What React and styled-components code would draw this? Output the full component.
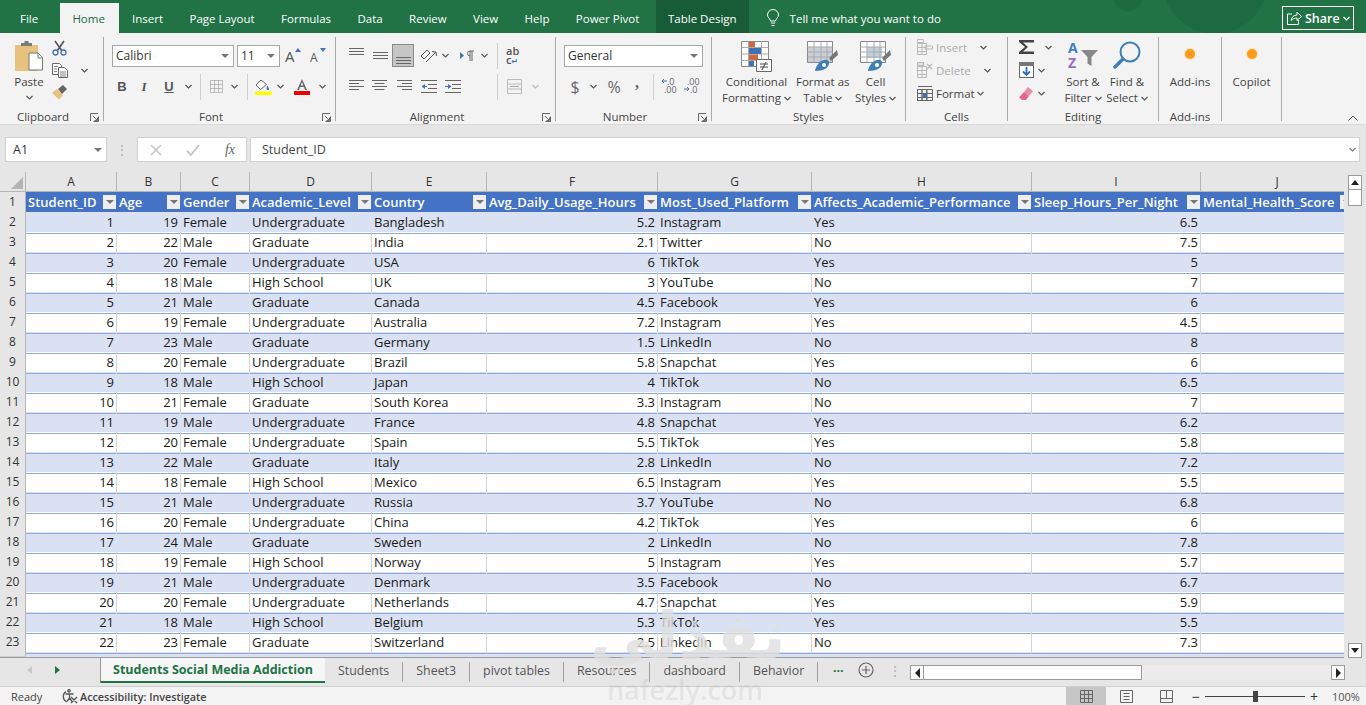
import styled, { createGlobalStyle } from 'styled-components';

const GlobalStyle = createGlobalStyle`
  html, body { margin: 0; padding: 0; height: 100%; overflow: hidden; background: #e6e6e6; }
  #root { height: 705px; }
  * { box-sizing: border-box; }
`;

const FONT = `"Open Sans", "Noto Sans", "Liberation Sans", sans-serif`;
const colWidths = [26, 91, 64, 69, 122, 115, 171, 154, 220, 169, 153];
const colTemplate = colWidths.map((w) => `${w}px`).join(' ');

const tabs = ['Insert', 'Page Layout', 'Formulas', 'Data', 'Review', 'View', 'Help', 'Power Pivot'];
const letters = ['A', 'B', 'C', 'D', 'E', 'F', 'G', 'H', 'I', 'J'];
const headers = [
  'Student_ID', 'Age', 'Gender', 'Academic_Level', 'Country', 'Avg_Daily_Usage_Hours',
  'Most_Used_Platform', 'Affects_Academic_Performance', 'Sleep_Hours_Per_Night', 'Mental_Health_Score',
];
const rows = [
  [1, 19, 'Female', 'Undergraduate', 'Bangladesh', 5.2, 'Instagram', 'Yes', 6.5],
  [2, 22, 'Male', 'Graduate', 'India', 2.1, 'Twitter', 'No', 7.5],
  [3, 20, 'Female', 'Undergraduate', 'USA', 6, 'TikTok', 'Yes', 5],
  [4, 18, 'Male', 'High School', 'UK', 3, 'YouTube', 'No', 7],
  [5, 21, 'Male', 'Graduate', 'Canada', 4.5, 'Facebook', 'Yes', 6],
  [6, 19, 'Female', 'Undergraduate', 'Australia', 7.2, 'Instagram', 'Yes', 4.5],
  [7, 23, 'Male', 'Graduate', 'Germany', 1.5, 'LinkedIn', 'No', 8],
  [8, 20, 'Female', 'Undergraduate', 'Brazil', 5.8, 'Snapchat', 'Yes', 6],
  [9, 18, 'Male', 'High School', 'Japan', 4, 'TikTok', 'No', 6.5],
  [10, 21, 'Female', 'Graduate', 'South Korea', 3.3, 'Instagram', 'No', 7],
  [11, 19, 'Male', 'Undergraduate', 'France', 4.8, 'Snapchat', 'Yes', 6.2],
  [12, 20, 'Female', 'Undergraduate', 'Spain', 5.5, 'TikTok', 'Yes', 5.8],
  [13, 22, 'Male', 'Graduate', 'Italy', 2.8, 'LinkedIn', 'No', 7.2],
  [14, 18, 'Female', 'High School', 'Mexico', 6.5, 'Instagram', 'Yes', 5.5],
  [15, 21, 'Male', 'Undergraduate', 'Russia', 3.7, 'YouTube', 'No', 6.8],
  [16, 20, 'Female', 'Undergraduate', 'China', 4.2, 'TikTok', 'Yes', 6],
  [17, 24, 'Male', 'Graduate', 'Sweden', 2, 'LinkedIn', 'No', 7.8],
  [18, 19, 'Female', 'High School', 'Norway', 5, 'Instagram', 'Yes', 5.7],
  [19, 21, 'Male', 'Undergraduate', 'Denmark', 3.5, 'Facebook', 'No', 6.7],
  [20, 20, 'Female', 'Undergraduate', 'Netherlands', 4.7, 'Snapchat', 'Yes', 5.9],
  [21, 18, 'Male', 'High School', 'Belgium', 5.3, 'TikTok', 'Yes', 5.5],
  [22, 23, 'Female', 'Graduate', 'Switzerland', 2.5, 'LinkedIn', 'No', 7.3],
];
const sheets = ['Students', 'Sheet3', 'pivot tables', 'Resources', 'dashboard', 'Behavior'];

// icons
const Chev = ({ color = '#555' }) => (
  <svg width="7" height="5" viewBox="0 0 7 5">
    <path d="M.5 1 3.500 4 6.500 1" fill="none" stroke={color} strokeWidth="1.200" />
  </svg>
);
const Caret = () => (
  <svg width="8" height="4" viewBox="0 0 8 4"><path d="M0 0h8L4 4z" fill="#777" /></svg>
);
const Launcher = () => (
  <svg width="9" height="9" viewBox="0 0 9 9" fill="none" stroke="#666">
    <path d="M.5 8V.5H8M8.500 3.500v5H3.500M3 3l4 4M7.500 4.500v3h-3" />
  </svg>
);
const Lines = ({ widths, w = 15, h = 13, top = 0, gap = 3, align = 'left', color = '#666' }) => (
  <svg width={w} height={h} viewBox={`0 0 ${w} ${h}`}>
    {widths.map((lw, i) => {
      const x = align === 'left' ? 0 : align === 'right' ? w - lw : (w - lw) / 2;
      return <rect key={i} x={x} y={top + i * gap} width={lw} height="1" fill={color} />;
    })}
  </svg>
);
const PasteIcon = () => (
  <svg width="30" height="32" viewBox="0 0 30 32">
    <path d="M1 4h23v26H1z" fill="#e6c27e" />
    <path d="M7 5V2h3.500V0h4v2H18v3z" fill="#7a7a7a" />
    <path d="M15 12h9l4.500 4.500V29H15z" fill="#fff" stroke="#777" />
    <path d="M24 12v5h4.500" fill="none" stroke="#777" />
  </svg>
);
const Scissors = () => (
  <svg width="15" height="16" viewBox="0 0 15 16" fill="none">
    <path d="M3 1 10 11M12 1 5 11" stroke="#555" strokeWidth="1.600" />
    <circle cx="3.500" cy="12.500" r="2.500" stroke="#3f73b5" strokeWidth="1.300" />
    <circle cx="11.500" cy="12.500" r="2.500" stroke="#3f73b5" strokeWidth="1.300" />
  </svg>
);
const CopyIcon = () => (
  <svg width="16" height="15" viewBox="0 0 16 15" fill="#fff" stroke="#666">
    <path d="M.5.500h7l2 2v9h-9z" />
    <path d="M6.500 4.500h6l3 3v7h-9z" />
    <path d="M2 3.500h4M2 6h3M2 8.500h3M8 9h6M8 11h6M8 13h6" strokeWidth=".8" />
  </svg>
);
const BrushIcon = () => (
  <svg width="16" height="15" viewBox="0 0 16 15">
    <path d="M5 4 11 10 7 14.500 0 8z" fill="#e6c27e" />
    <path d="M6 4 11 0 15 4 10 9z" fill="#666" />
  </svg>
);
const GrowA = ({ up, size }) => (
  <svg width="16" height="15" viewBox="0 0 16 15">
    <text x="0" y="14" fontFamily={FONT} fontSize={size} fill="#555">A</text>
    <path d={up ? 'M10 4 13 0 16 4z' : 'M10 0h6l-3 4z'} fill="#3f73b5" />
  </svg>
);
const BorderIcon = () => (
  <svg width="13" height="13" viewBox="0 0 13 13" fill="none" stroke="#888" strokeDasharray="1 1">
    <path d="M.5.500h12v12H.5zM.5 4.500h12M.5 8.500h12M4.500.5v12M8.500.5v12" />
  </svg>
);
const FillIcon = () => (
  <svg width="17" height="16" viewBox="0 0 17 16">
    <path d="M6 1 1 6l4.500 4.500 6-5z" fill="#fff" stroke="#666" />
    <path d="M12 6.500c1.500 2 2.500 3 2 4s-2.500.5-2.500-.5z" fill="#3f73b5" />
    <rect x="0" y="12.500" width="17" height="3.500" fill="#ffff00" />
  </svg>
);
const ColorA = () => (
  <svg width="16" height="16" viewBox="0 0 16 16">
    <path d="M8 0 3 11h2l1-3h4l1 3h2zM6.700 6.500 8 3l1.300 3.500z" fill="#666" />
    <rect y="12" width="16" height="4" fill="#f00000" />
  </svg>
);
const OrientIcon = () => (
  <svg width="18" height="16" viewBox="0 0 18 16" fill="none" stroke="#555">
    <path d="M1 8 7 2l3 3-6 6zM6 14 16 4M12 3.500l4 .5.500 4" />
  </svg>
);
const IndentIcon = ({ flip }) => (
  <svg width="16" height="13" viewBox="0 0 16 13">
    <path d="M0 .5h16M7 4.500h9M7 8.500h9M0 12.500h16" stroke="#666" />
    <path d={flip ? 'M3 4 6.500 6.500 3 9z' : 'M4 4 .5 6.500 4 9z'} fill="#3f73b5" />
    <rect x={flip ? 0 : 3} y="6" width="3" height="1" fill="#3f73b5" />
  </svg>
);
const ParaIcon = () => (
  <svg width="15" height="12" viewBox="0 0 15 12">
    <path d="M0 2 4 5.500 0 9z" fill="#3f73b5" />
    <path d="M10 11V1h4M12 11V1M10 1a2.500 2.500 0 0 0 0 5" fill="none" stroke="#666" />
  </svg>
);
const MergeIcon = () => (
  <svg width="15" height="15" viewBox="0 0 15 15" fill="none" stroke="#bbb">
    <path d="M.5.500h14v14H.5zM.5 5h14M.5 10h14" />
    <path d="M3 7.500h9" stroke="#9ab" />
  </svg>
);
const DecIcon = ({ more }) => (
  <svg width="16" height="17" viewBox="0 0 16 17">
    <text x={more ? 3 : 6} y="7" fontFamily={FONT} fontSize="9" fill="#666">{more ? '.00' : '.0'}</text>
    <text x={more ? 6 : 3} y="15" fontFamily={FONT} fontSize="9" fill="#666">{more ? '.0' : '.00'}</text>
    {more
      ? <path d="M0 11h5M3 9l2 2-2 2" stroke="#3f73b5" fill="none" />
      : <path d="M6 3H1M3 1 1 3l2 2" stroke="#3f73b5" fill="none" />}
  </svg>
);
const CondIcon = () => (
  <svg width="31" height="31" viewBox="0 0 31 31">
    <path d="M.5.500h27v25H.5z" fill="#fff" stroke="#888" />
    <path d="M.5 6.500h27M.5 13h27M.5 19.500h27M7.500.5v25M20.500.5v25" stroke="#aaa" />
    <rect x="8" y="1" width="6" height="5" fill="#d2683a" />
    <rect x="8" y="7" width="12" height="6" fill="#3f73b5" />
    <rect x="8" y="13.500" width="9" height="5.500" fill="#d2683a" />
    <rect x="8" y="20" width="5" height="5" fill="#3f73b5" />
    <path d="M15.500 18.500h15v12h-15z" fill="#fff" stroke="#666" />
    <path d="M19 23h8M19 26h8M25 21l-4 8" stroke="#444" fill="none" />
  </svg>
);
const TableBrush = ({ cell }) => (
  <svg width="31" height="31" viewBox="0 0 31 31">
    <path d="M.5.500h25v21H.5z" fill="#fff" stroke="#888" />
    {cell
      ? <rect x="7" y="6" width="15" height="11" fill="#c3cfdd" />
      : <rect x="1" y="6" width="24" height="15" fill="#c9cfd6" />}
    <path d="M.5 6h25M.5 11h25M.5 16h25M7 .5v21M14 .5v21M20 .5v21" stroke="#aaa" />
    <path d="M30 9 22 17l2 3 7-6z" fill="#777" />
    <path d="M8 30c1-6 5-10 9-11 4-1 6 2 5 4-1 4-5 7-14 7z" fill="#3f7fb8" />
    <circle cx="17" cy="24" r="2" fill="#fff" />
  </svg>
);
const CellIcon = ({ kind, dim }) => {
  const s = dim ? '#b9b9b9' : '#777';
  return (
    <svg width="16" height="16" viewBox="0 0 16 16" fill="none" stroke={s}>
      <path d="M.5 4.500h9M.5 8.500h9M.5 12.500h9M.5 4.500v11h9v-11M5 4.500v11" />
      {kind === 'insert' && <path d="M.5.500h6v3h-6zM8 7h7.500v3H8z" />}
      {kind === 'delete' && <path d="M.5.500h6v3h-6zM10 2l5 5M15 2l-5 5" strokeWidth="1.300" />}
      {kind === 'format' && <path d="M1 1.500h14M.5 4.500h15v11H.5zM.5 8.500h15M.5 12.500h15M5 4.500v11M10 4.500v11" stroke="#666" />}
      {kind === 'format' && <rect x="6" y="9" width="4" height="3" fill="#3f73b5" stroke="none" />}
    </svg>
  );
};
const SigmaIcon = () => (
  <svg width="16" height="14" viewBox="0 0 16 14">
    <path d="M0 0h15v2.500H4L9 7l-5 4.500h11V14H0v-2l6-5-6-5z" fill="#444" />
  </svg>
);
const FillDown = () => (
  <svg width="15" height="16" viewBox="0 0 15 16">
    <rect x=".5" y=".5" width="14" height="15" fill="#fff" stroke="#666" />
    <rect x="0" y="0" width="15" height="4" fill="#777" />
    <path d="M7.500 5v8M4 9.500l3.500 3.500L11 9.500" fill="none" stroke="#2f6fb5" strokeWidth="1.800" />
  </svg>
);
const EraserIcon = () => (
  <svg width="14" height="13" viewBox="0 0 14 13">
    <path d="M9 0l5 4-4 5-5-4z" fill="#e88ea8" />
    <path d="M5 5l5 4-3 4H3L0 10.500z" fill="#e0688a" />
  </svg>
);
const SortIcon = () => (
  <svg width="31" height="30" viewBox="0 0 31 30">
    <text x="0" y="12" fontFamily={FONT} fontSize="14" fontWeight="700" fill="#3f7fc4">A</text>
    <text x="0" y="27" fontFamily={FONT} fontSize="14" fontWeight="700" fill="#9a6fc0">Z</text>
    <path d="M13 9h17l-6.500 7v9l-4-2.500V16z" fill="#888" />
  </svg>
);
const SearchIcon = () => (
  <svg width="28" height="28" viewBox="0 0 28 28" fill="none">
    <circle cx="17" cy="11" r="9.500" stroke="#3f7fb8" strokeWidth="2" />
    <path d="M10 18 2 26" stroke="#3f7fb8" strokeWidth="3.500" strokeLinecap="round" />
  </svg>
);
const CrossIcon = () => (
  <svg width="12" height="12" viewBox="0 0 12 12"><path d="M1 1l10 10M11 1 1 11" stroke="#c4c4c4" strokeWidth="1.500" /></svg>
);
const CheckIcon = () => (
  <svg width="14" height="12" viewBox="0 0 14 12"><path d="M1 7l4 4 8-10" fill="none" stroke="#c4c4c4" strokeWidth="1.800" /></svg>
);
const BulbIcon = () => (
  <svg width="12" height="18" viewBox="0 0 12 18" fill="none" stroke="#fff">
    <path d="M3.500 12C3 9.500.5 8.500.5 6a5.500 5.500 0 0 1 11 0c0 2.500-2.500 3.500-3 6zM3.800 14h4.400M4.500 16.500h3" />
  </svg>
);
const ShareIcon = () => (
  <svg width="15" height="14" viewBox="0 0 15 14" fill="none" stroke="#fff">
    <path d="M5 3H.5v10.500h11V9M4 9.500C4.500 6 7 4 10 4V1l4.500 4.500L10 9.500V7C7.500 7 5.500 8 4 9.500z" />
  </svg>
);
const ArrowBtn = ({ dir }) => {
  const d = { up: 'M1 6 5 1 9 6z', down: 'M1 1 5 6 9 1z', left: 'M6 0 1 5 6 10z', right: 'M1 0 6 5 1 10z' }[dir];
  const vertical = dir === 'up' || dir === 'down';
  return <svg width={vertical ? 10 : 7} height={vertical ? 7 : 10}><path d={d} fill="#222" /></svg>;
};
const AccessIcon = () => (
  <svg width="17" height="15" viewBox="0 0 17 15" fill="none" stroke="#555" strokeWidth="1.300">
    <path d="M5 2.500A6 6 0 0 0 5 12.500" />
    <circle cx="8" cy="1.800" r="1.200" />
    <path d="M4.500 5h8M8.500 5v4M8.500 9l-3 4M8.500 9l3 4M10 8l6 6M16 8l-6 6" />
  </svg>
);
const NormalView = () => (
  <svg width="13" height="13" viewBox="0 0 13 13" fill="none" stroke="#666">
    <path d="M.5.500h12v12H.5zM.5 4.500h12M.5 8.500h12M4.500.5v12M8.500.5v12" />
  </svg>
);
const PageView = () => (
  <svg width="13" height="13" viewBox="0 0 13 13" fill="none" stroke="#666">
    <path d="M.5.500h12v12H.5zM3.500 3.500h6M3.500 6.500h6M3.500 9.500h6" />
  </svg>
);
const BreakView = () => (
  <svg width="13" height="13" viewBox="0 0 13 13" fill="none" stroke="#666">
    <path d="M.5.500h12v12H.5zM.5 8.500h12M6.500.5v8" />
  </svg>
);

const Group = ({ width, label, launcher, children }) => (
  <GroupBox $w={width}>
    <GroupBody>{children}</GroupBody>
    <GroupLabel $launcher={launcher}>
      {label}
      {launcher && <LauncherSpot><Launcher /></LauncherSpot>}
    </GroupLabel>
  </GroupBox>
);

const BigButton = ({ w, icon, children }) => (
  <BigTool $w={w}>
    <BigIcon>{icon}</BigIcon>
    <BigText>{children}</BigText>
  </BigTool>
);

export default function App() {
  return (
    <Page>
      <GlobalStyle />
      <TitleBar>
        <TitleArt width="326" height="33" viewBox="0 0 326 33">
          <circle cx="175" cy="-18" r="52" fill="#1e6a40" />
          <circle cx="88" cy="-4" r="15" fill="#1e6a40" />
        </TitleArt>
        <Tab>File</Tab>
        <Tab $active>Home</Tab>
        {tabs.map((t) => <Tab key={t}>{t}</Tab>)}
        <Tab $dark>Table Design</Tab>
        <TellMe><BulbIcon /><span>Tell me what you want to do</span></TellMe>
        <ShareBtn><ShareIcon /><span>Share</span><Chev color="#fff" /></ShareBtn>
      </TitleBar>

      <Ribbon>
        <Group width={104} label="Clipboard" launcher>
          <PasteCol>
            <PasteIcon />
            <PasteText>Paste</PasteText>
            <Chev />
          </PasteCol>
          <ClipCol>
            <Scissors />
            <ClipCopy><CopyIcon /><Chev /></ClipCopy>
            <BrushIcon />
          </ClipCol>
        </Group>

        <Group width={232} label="Font" launcher>
          <ToolStack $pl={8}>
            <ToolRow>
              <SelectBox $w={122}>Calibri<Caret /></SelectBox>
              <SelectBox $w={43} $ml={3}>11<Caret /></SelectBox>
              <ToolBtn $w={26}><GrowA up size={15} /></ToolBtn>
              <ToolBtn $w={23}><GrowA size={12} /></ToolBtn>
            </ToolRow>
            <ToolRow>
              <ToolBtn $w={20}><BoldGlyph>B</BoldGlyph></ToolBtn>
              <ToolBtn $w={24}><ItalicGlyph>I</ItalicGlyph></ToolBtn>
              <ToolBtn $w={26}><UnderGlyph>U</UnderGlyph></ToolBtn>
              <ToolBtn $w={13}><Chev /></ToolBtn>
              <VSep $m={5} />
              <ToolBtn $w={20}><BorderIcon /></ToolBtn>
              <ToolBtn $w={16}><Chev /></ToolBtn>
              <VSep $m={5} />
              <ToolBtn $w={20}><FillIcon /></ToolBtn>
              <ToolBtn $w={14}><Chev /></ToolBtn>
              <ToolBtn $w={30}><ColorA /></ToolBtn>
              <ToolBtn $w={10}><Chev /></ToolBtn>
            </ToolRow>
          </ToolStack>
        </Group>

        <Group width={220} label="Alignment" launcher>
          <ToolStack $pl={8}>
            <ToolRow>
              <ToolBtn $w={24}><Lines widths={[15, 15, 15]} h={20} top={2} /></ToolBtn>
              <ToolBtn $w={24}><Lines widths={[15, 15, 15]} h={20} top={6} /></ToolBtn>
              <ActiveTool><Lines widths={[15, 15, 15]} h={20} top={11} /></ActiveTool>
              <ToolBtn $w={24} $ml={3}><OrientIcon /></ToolBtn>
              <ToolBtn $w={8}><Chev /></ToolBtn>
              <ToolBtn $w={24} $ml={6}><ParaIcon /></ToolBtn>
              <ToolBtn $w={10}><Chev /></ToolBtn>
              <VSep $m={8} />
              <WrapGlyph>ab<br />c<WrapArrow>↵</WrapArrow></WrapGlyph>
            </ToolRow>
            <ToolRow>
              <ToolBtn $w={24}><Lines widths={[15, 10, 15, 10]} /></ToolBtn>
              <ToolBtn $w={23}><Lines widths={[15, 10, 15, 10]} align="center" /></ToolBtn>
              <ToolBtn $w={26}><Lines widths={[15, 10, 15, 10]} align="right" /></ToolBtn>
              <ToolBtn $w={24}><IndentIcon /></ToolBtn>
              <ToolBtn $w={24}><IndentIcon flip /></ToolBtn>
              <ToolBtn $w={24} />
              <VSep $m={8} />
              <ToolBtn $w={16}><MergeIcon /></ToolBtn>
              <ToolBtn $w={26}><Chev color="#bbb" /></ToolBtn>
            </ToolRow>
          </ToolStack>
        </Group>

        <Group width={156} label="Number" launcher>
          <ToolStack $pl={8}>
            <ToolRow>
              <SelectBox $w={139}>General<Caret /></SelectBox>
            </ToolRow>
            <ToolRow>
              <ToolBtn $w={22}><NumGlyph>$</NumGlyph></ToolBtn>
              <ToolBtn $w={14}><Chev /></ToolBtn>
              <ToolBtn $w={28}><NumGlyph>%</NumGlyph></ToolBtn>
              <ToolBtn $w={18}><CommaText>,</CommaText></ToolBtn>
              <VSep $m={7} />
              <ToolBtn $w={16}><DecIcon /></ToolBtn>
              <ToolBtn $w={16} $ml={7}><DecIcon more /></ToolBtn>
            </ToolRow>
          </ToolStack>
        </Group>

        <Group width={194} label="Styles">
          <BigRow $pl={10}>
            <BigButton w={69} icon={<CondIcon />}>Conditional<br />Formatting <Chev /></BigButton>
            <BigButton w={53} icon={<TableBrush />}>Format as<br />Table <Chev /></BigButton>
            <BigButton w={42} icon={<TableBrush cell />}>Cell<br />Styles <Chev /></BigButton>
          </BigRow>
        </Group>

        <Group width={102} label="Cells">
          <CellStack>
            <CellRow $dim><CellIcon kind="insert" dim /><span>Insert</span><CellChev $w={10}><Chev /></CellChev></CellRow>
            <CellRow $dim><CellIcon kind="delete" dim /><span>Delete</span><CellChev $w={10}><Chev /></CellChev></CellRow>
            <CellRow><CellIcon kind="format" /><span>Format</span><CellChev $w={-1}><Chev /></CellChev></CellRow>
          </CellStack>
        </Group>

        <Group width={151} label="Editing">
          <EditCol>
            <EditRow><SigmaIcon /><EditChev $w={10}><Chev /></EditChev></EditRow>
            <EditRow><FillDown /><EditChev $w={4}><Chev /></EditChev></EditRow>
            <EditRow><EraserIcon /><EditChev $w={5}><Chev /></EditChev></EditRow>
          </EditCol>
          <BigButton w={44} icon={<SortIcon />}>Sort &amp;<br />Filter <Chev /></BigButton>
          <BigButton w={44} icon={<SearchIcon />}>Find &amp;<br />Select <Chev /></BigButton>
        </Group>

        <Group width={63} label="Add-ins">
          <AddinTool><Dot /><BigText>Add-ins</BigText></AddinTool>
        </Group>
        <Group width={60} label="">
          <AddinTool><Dot /><BigText>Copilot</BigText></AddinTool>
        </Group>
        <Collapse>
          <svg width="10" height="6" viewBox="0 0 10 6"><path d="M.5 5.500 5 1l4.500 4.500" fill="none" stroke="#555" /></svg>
        </Collapse>
      </Ribbon>

      <FormulaBar>
        <NameBox>A1<Caret /></NameBox>
        <GripDots>⋮</GripDots>
        <FormulaBtns>
          <CrossIcon />
          <CheckIcon />
          <FxText>fx</FxText>
        </FormulaBtns>
        <FormulaInput>
          Student_ID
          <Chev color="#777" />
        </FormulaInput>
      </FormulaBar>

      <SheetArea>
        <Grid>
          <ColHeadRow>
            <CornerCell>
              <svg width="12" height="12" viewBox="0 0 12 12"><path d="M12 0v12H0z" fill="#b4b4b4" /></svg>
            </CornerCell>
            {letters.map((l) => <ColHead key={l}>{l}</ColHead>)}
          </ColHeadRow>
          <TableHeadRow>
            <RowNum>1</RowNum>
            {headers.map((h) => (
              <HeadCell key={h}>
                <span>{h}</span>
                <FilterBtn><Caret /></FilterBtn>
              </HeadCell>
            ))}
          </TableHeadRow>
          {rows.map((r, i) => (
            <DataRow key={r[0]} $band={i % 2 === 0}>
              <RowNum>{i + 2}</RowNum>
              {r.map((v, j) => (
                <Cell key={j} $num={typeof v === 'number'} $band={i % 2 === 0}>{v}</Cell>
              ))}
              <Cell $band={i % 2 === 0} />
            </DataRow>
          ))}
          <PartialRow>
            <RowNum />
          </PartialRow>
        </Grid>
        <VScroll>
          <ScrollBtn><ArrowBtn dir="up" /></ScrollBtn>
          <VThumb />
          <VTrack />
          <ScrollBtn><ArrowBtn dir="down" /></ScrollBtn>
        </VScroll>
      </SheetArea>

      <TabStrip>
        <SheetNav>
          <svg width="5" height="8" viewBox="0 0 5 8"><path d="M5 0v8L0 4z" fill="#c8c8c8" /></svg>
          <svg width="5" height="8" viewBox="0 0 5 8"><path d="M0 0v8l5-4z" fill="#217346" /></svg>
        </SheetNav>
        <ActiveSheet>Students Social Media Addiction</ActiveSheet>
        {sheets.map((s) => <SheetTab key={s}>{s}</SheetTab>)}
        <MoreDots>...</MoreDots>
        <AddSheet>
          <svg width="16" height="16" viewBox="0 0 16 16" fill="none" stroke="#666" strokeWidth="1.200">
            <circle cx="8" cy="8" r="7" /><path d="M8 4v8M4 8h8" />
          </svg>
        </AddSheet>
        <GripDots>⋮</GripDots>
        <HScroll>
          <ScrollBtn $h><ArrowBtn dir="left" /></ScrollBtn>
          <HThumb />
          <HTrack />
          <ScrollBtn $h><ArrowBtn dir="right" /></ScrollBtn>
        </HScroll>
      </TabStrip>

      <StatusBar>
        <StatusText>Ready</StatusText>
        <AccessWrap><AccessIcon /><span>Accessibility: Investigate</span></AccessWrap>
        <ViewBtn $active><NormalView /></ViewBtn>
        <ViewBtn><PageView /></ViewBtn>
        <ViewBtn><BreakView /></ViewBtn>
        <ZoomMark $ml={3}>−</ZoomMark>
        <ZoomTrack><ZoomThumb /></ZoomTrack>
        <ZoomMark>+</ZoomMark>
        <ZoomPct>100%</ZoomPct>
      </StatusBar>

      <WatermarkLogo>نفذلي</WatermarkLogo>
      <WatermarkUrl>nafezly.com</WatermarkUrl>
    </Page>
  );
}

const Page = styled.div`
  position: relative;
  width: 1366px;
  height: 705px;
  overflow: hidden;
  display: flex;
  flex-direction: column;
  font-family: ${FONT};
  background: #e6e6e6;
`;

const TitleBar = styled.div`
  position: relative;
  flex: 0 0 33px;
  display: flex;
  align-items: stretch;
  padding: 3px 0 0 6.8px;
  background: #217346;
  color: #fff;
  font-size: 11.5px;
`;
const TitleArt = styled.svg`
  position: absolute;
  right: 0;
  top: 0;
`;
const Tab = styled.div`
  position: relative;
  display: flex;
  align-items: center;
  padding: ${(p) => (p.$active ? '0 14px 0 12px' : p.$dark ? '0 12px' : '0 13.2px')};
  color: ${(p) => (p.$active ? '#1d6b41' : '#fff')};
  background: ${(p) => (p.$active ? '#f3f3f3' : p.$dark ? '#185c37' : 'transparent')};
  margin: ${(p) => (p.$active ? '0 0 0 9px' : p.$dark ? '-3px 0 0 3.5px' : '0')};
  border-top: ${(p) => (p.$dark ? '3px solid #185c37' : '0')};
`;
const TellMe = styled.div`
  position: relative;
  display: flex;
  align-items: center;
  gap: 11px;
  margin-left: 18px;
`;
const ShareBtn = styled.div`
  position: relative;
  flex: none;
  align-self: flex-start;
  width: 72px;
  height: 24px;
  margin: 3px 12px 0 auto;
  display: flex;
  align-items: center;
  gap: 3px;
  padding-left: 4px;
  border: 1px solid #fff;
  font-weight: 600;
  font-size: 12.5px;
`;

const Ribbon = styled.div`
  position: relative;
  flex: 0 0 92px;
  display: flex;
  background: #f3f3f3;
  padding-top: 4px;
  border-bottom: 1px solid #d8d8d8;
  color: #444;
  font-size: 11.5px;
`;
const GroupBox = styled.div`
  flex: 0 0 ${(p) => p.$w}px;
  min-width: 0;
  height: 84px;
  display: flex;
  flex-direction: column;
  border-right: 1px solid #a9a9a9;
`;
const GroupBody = styled.div`
  flex: 0 0 72px;
  display: flex;
  min-height: 0;
`;
const GroupLabel = styled.div`
  position: relative;
  height: 12px;
  padding-right: ${(p) => (p.$launcher ? '17px' : '0')};
  line-height: 16px;
  text-align: center;
  color: #444;
  font-size: 11.5px;
`;
const LauncherSpot = styled.span`
  position: absolute;
  right: 4px;
  top: 4px;
  line-height: 0;
`;
const PasteCol = styled.div`
  width: 52px;
  display: flex;
  flex-direction: column;
  align-items: center;
  padding: 4px 0 0 6px;
`;
const PasteText = styled.div`
  margin: 1px 0 5px;
  line-height: 16px;
`;
const ClipCol = styled.div`
  display: flex;
  flex-direction: column;
  align-items: flex-start;
  gap: 7px;
  padding-top: 3px;
`;
const ClipCopy = styled.div`
  display: flex;
  align-items: center;
  gap: 13px;
`;
const ToolStack = styled.div`
  display: flex;
  flex-direction: column;
  gap: 8px;
  padding: 7px 0 0 ${(p) => p.$pl}px;
`;
const ToolRow = styled.div`
  height: 23px;
  display: flex;
  align-items: center;
`;
const ToolBtn = styled.div`
  flex: 0 0 ${(p) => p.$w}px;
  height: 22px;
  margin-left: ${(p) => p.$ml || 0}px;
  display: flex;
  align-items: center;
  justify-content: center;
  color: #555;
`;
const ActiveTool = styled.div`
  flex: 0 0 22px;
  height: 23px;
  display: flex;
  align-items: center;
  justify-content: center;
  background: #c6c6c6;
  border: 1px solid #8a8a8a;
`;
const VSep = styled.div`
  flex: none;
  width: 1px;
  height: 26px;
  margin: 0 ${(p) => p.$m}px;
  background: #cfcfcf;
`;
const SelectBox = styled.div`
  flex: 0 0 ${(p) => p.$w}px;
  margin-left: ${(p) => p.$ml || 0}px;
  height: 22px;
  display: flex;
  align-items: center;
  justify-content: space-between;
  padding: 0 4px 0 3px;
  background: #fff;
  border: 1px solid #a6a6a6;
  color: #333;
  font-size: 12px;
`;
const BoldGlyph = styled.span`
  font: 700 13px "Liberation Sans", sans-serif;
  color: #555;
`;
const ItalicGlyph = styled.span`
  font: italic 700 13px "Liberation Serif", serif;
  color: #555;
`;
const UnderGlyph = styled.span`
  font: 700 13px "Liberation Sans", sans-serif;
  text-decoration: underline;
  color: #555;
`;
const WrapGlyph = styled.div`
  font: 600 11px/9px ${FONT};
  color: #555;
`;
const WrapArrow = styled.span`
  font: 700 8px/8px "DejaVu Sans", sans-serif;
  color: #3f73b5;
`;
const NumGlyph = styled.span`
  font-size: 16px;
  color: #666;
`;
const CommaText = styled.span`
  font: 700 16px/10px "Liberation Serif", serif;
  color: #666;
  margin-top: -8px;
`;
const BigRow = styled.div`
  display: flex;
  gap: 5px;
  padding-left: ${(p) => p.$pl}px;
`;
const BigTool = styled.div`
  flex: 0 0 ${(p) => p.$w}px;
  display: flex;
  flex-direction: column;
  align-items: center;
  padding-top: 4px;
`;
const BigIcon = styled.div`
  height: 31px;
  line-height: 0;
`;
const BigText = styled.div`
  margin-top: 2px;
  line-height: 16px;
  text-align: center;
  white-space: nowrap;
  svg { vertical-align: middle; }
`;
const CellStack = styled.div`
  display: flex;
  flex-direction: column;
  gap: 7px;
  padding: 2px 0 0 11px;
`;
const CellRow = styled.div`
  height: 16px;
  display: flex;
  align-items: center;
  gap: 3px;
  color: ${(p) => (p.$dim ? '#aaa' : '#444')};
`;
const CellChev = styled.span`
  margin-left: ${(p) => p.$w}px;
  line-height: 0;
`;
const EditCol = styled.div`
  flex: 0 0 53px;
  display: flex;
  flex-direction: column;
  gap: 7px;
  padding: 2px 0 0 11px;
`;
const EditRow = styled.div`
  height: 16px;
  display: flex;
  align-items: center;
`;
const EditChev = styled.span`
  margin-left: ${(p) => p.$w}px;
  line-height: 0;
`;
const AddinTool = styled.div`
  flex: 1;
  display: flex;
  flex-direction: column;
  align-items: center;
  padding-top: 12px;
`;
const Dot = styled.div`
  width: 10px;
  height: 10px;
  margin-bottom: 13px;
  border-radius: 50%;
  background: #ff9a1a;
  box-shadow: 0 0 2px #ffc070;
`;
const Collapse = styled.div`
  position: absolute;
  right: 8px;
  bottom: 3px;
  line-height: 0;
`;

const FormulaBar = styled.div`
  flex: 0 0 47px;
  display: flex;
  align-items: flex-start;
  padding: 12px 6px 0 5px;
  background: #e6e6e6;
`;
const NameBox = styled.div`
  width: 102px;
  height: 25px;
  display: flex;
  align-items: center;
  justify-content: space-between;
  padding: 0 4px 0 7px;
  background: #fff;
  border: 1px solid #d0d0d0;
  color: #333;
  font-size: 12.5px;
`;
const GripDots = styled.div`
  flex: 0 0 30px;
  height: 25px;
  line-height: 25px;
  text-align: center;
  color: #b0b0b0;
  font-size: 14px;
`;
const FormulaBtns = styled.div`
  width: 110px;
  height: 25px;
  display: flex;
  align-items: center;
  justify-content: space-between;
  padding: 0 11px 0 12px;
  background: #fff;
  border: 1px solid #d0d0d0;
`;
const FxText = styled.span`
  font: italic 400 14px "Liberation Serif", serif;
  color: #666;
`;
const FormulaInput = styled.div`
  flex: 1;
  height: 25px;
  margin-left: 3px;
  display: flex;
  align-items: center;
  justify-content: space-between;
  padding: 0 3px 0 11px;
  background: #fff;
  border: 1px solid #d0d0d0;
  color: #444;
  font-size: 12.5px;
`;

const SheetArea = styled.div`
  flex: 0 0 485px;
  display: flex;
`;
const Grid = styled.div`
  flex: 0 0 1344px;
  overflow: hidden;
  background: #fff;
  border-bottom: 1px solid #9a9a9a;
`;
const ColHeadRow = styled.div`
  display: grid;
  grid-template-columns: ${colTemplate};
  height: 20px;
  background: #e6e6e6;
  border-bottom: 1px solid #b5b5b5;
`;
const CornerCell = styled.div`
  display: flex;
  align-items: flex-end;
  justify-content: flex-end;
  padding: 0 2px 2px 0;
  border-right: 1px solid #b5b5b5;
`;
const ColHead = styled.div`
  text-align: center;
  line-height: 19px;
  font-size: 12px;
  color: #333;
  border-right: 1px solid #b5b5b5;
`;
const TableHeadRow = styled.div`
  display: grid;
  grid-template-columns: ${colTemplate};
  height: 20px;
  background: #4472c4;
`;
const RowNum = styled.div`
  height: 100%;
  text-align: center;
  line-height: 20px;
  font-size: 12px;
  color: #333;
  background: #e6e6e6;
  border-right: 1px solid #b5b5b5;
  border-bottom: 1px solid #cfcfcf;
`;
const HeadCell = styled.div`
  display: flex;
  align-items: center;
  justify-content: space-between;
  padding: 0 1px 2px 2px;
  overflow: hidden;
  color: #fff;
  font-size: 13px;
  font-weight: 600;
  white-space: nowrap;
`;
const FilterBtn = styled.div`
  flex: 0 0 13px;
  height: 14px;
  display: flex;
  align-items: center;
  justify-content: center;
  background: #eeeeee;
`;
const DataRow = styled.div`
  display: grid;
  grid-template-columns: ${colTemplate};
  height: 20px;
  background: ${(p) => (p.$band ? '#d9e1f2' : '#fff')};
`;
const Cell = styled.div`
  padding: 0 2px;
  line-height: 21px;
  text-align: ${(p) => (p.$num ? 'right' : 'left')};
  font-size: 13px;
  color: #1a1a1a;
  white-space: nowrap;
  border-bottom: 1px solid #8ea9db;
  border-right: 1px solid ${(p) => (p.$band ? '#d9e1f2' : '#d4d4d4')};
`;
const PartialRow = styled.div`
  display: grid;
  grid-template-columns: ${colTemplate};
  height: 5px;
  background: #d9e1f2;
`;
const VScroll = styled.div`
  flex: 1;
  display: flex;
  flex-direction: column;
  padding: 3px 4px 0;
`;
const ScrollBtn = styled.div`
  flex: 0 0 ${(p) => (p.$h ? '14px' : '15px')};
  display: flex;
  align-items: center;
  justify-content: center;
  background: #fff;
  border: 1px solid #9a9a9a;
`;
const VThumb = styled.div`
  flex: 0 0 17px;
  margin-top: -1px;
  background: #fff;
  border: 1px solid #9a9a9a;
`;
const VTrack = styled.div`
  flex: 1;
`;

const TabStrip = styled.div`
  flex: 0 0 28px;
  display: flex;
  align-items: flex-start;
  background: #e6e6e6;
  color: #555;
  font-size: 12.4px;
`;
const SheetNav = styled.div`
  flex: 0 0 100px;
  height: 24px;
  display: flex;
  align-items: center;
  gap: 23px;
  padding-left: 27px;
`;
const ActiveSheet = styled.div`
  flex: 0 0 225px;
  height: 25px;
  line-height: 24px;
  text-align: center;
  font-size: 12.5px;
  background: #f6f6f6;
  border-left: 1px solid #9a9a9a;
  border-bottom: 2px solid #217346;
  color: #217346;
  font-weight: 700;
`;
const SheetTab = styled.div`
  flex: none;
  height: 20px;
  margin-top: 4px;
  line-height: 18px;
  padding: 0 13px;
  border-right: 1px solid #a0a0a0;
`;
const MoreDots = styled.div`
  flex: 0 0 34px;
  margin-top: 1px;
  padding-left: 6px;
  text-align: center;
  color: #217346;
  font-weight: 700;
`;
const AddSheet = styled.div`
  flex: 0 0 28px;
  height: 24px;
  display: flex;
  align-items: center;
  justify-content: center;
`;
const HScroll = styled.div`
  flex: 0 0 435px;
  height: 15px;
  margin: 7px 21px 0 auto;
  display: flex;
`;
const HThumb = styled.div`
  flex: 0 0 218px;
  background: #fff;
  border: 1px solid #9a9a9a;
  border-left: 0;
`;
const HTrack = styled.div`
  flex: 1;
  background: #ececec;
`;

const StatusBar = styled.div`
  flex: 0 0 20px;
  display: flex;
  align-items: center;
  background: #f3f3f3;
  border-top: 1px solid #d0d0d0;
  color: #444;
  font-size: 11px;
`;
const StatusText = styled.div`
  flex: 0 0 61px;
  padding-left: 11px;
`;
const AccessWrap = styled.div`
  flex: 0 0 1005px;
  display: flex;
  align-items: center;
  gap: 2px;
  font-weight: 600;
  font-size: 10.8px;
`;
const ViewBtn = styled.div`
  flex: 0 0 40px;
  height: 19px;
  display: flex;
  align-items: center;
  justify-content: center;
  background: ${(p) => (p.$active ? '#c6c6c6' : 'transparent')};
`;
const ZoomMark = styled.div`
  flex: 0 0 14px;
  margin-left: ${(p) => p.$ml || 0}px;
  text-align: center;
  font-size: 14px;
  line-height: 18px;
  color: #333;
`;
const ZoomTrack = styled.div`
  position: relative;
  flex: 0 0 100px;
  height: 1px;
  margin: 0 2px;
  background: #444;
`;
const ZoomThumb = styled.div`
  position: absolute;
  left: 48px;
  top: -5px;
  width: 5px;
  height: 11px;
  background: #444;
`;
const ZoomPct = styled.div`
  margin-left: 11px;
  color: #555;
`;

const WatermarkLogo = styled.div`
  position: absolute;
  left: 590px;
  top: 604px;
  width: 190px;
  text-align: center;
  white-space: nowrap;
  font: 700 64px/64px "DejaVu Sans", sans-serif;
  color: rgba(222, 222, 222, 0.8);
  pointer-events: none;
`;
const WatermarkUrl = styled.div`
  position: absolute;
  left: 590px;
  top: 675px;
  width: 190px;
  text-align: center;
  font: 600 27px/30px "Open Sans", sans-serif;
  color: rgba(190, 190, 190, 0.3);
  pointer-events: none;
`;
